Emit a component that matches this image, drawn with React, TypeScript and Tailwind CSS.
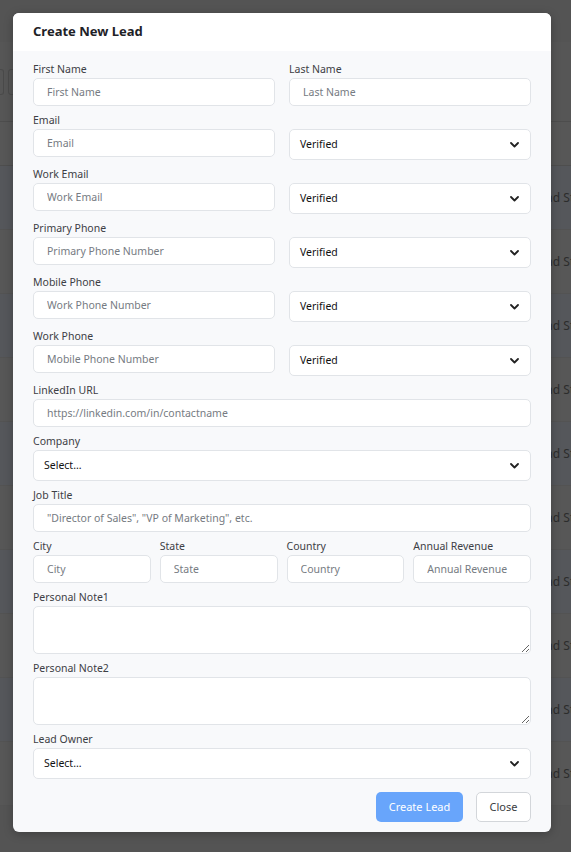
import React from "react";

const font = { fontFamily: '"Noto Sans", "Open Sans", Arial, sans-serif' };

function Chevron() {
  return (
    <svg width="9" height="6" viewBox="0 0 9 6" className="shrink-0">
      <polyline
        points="1,1 4.5,4.5 8,1"
        fill="none"
        stroke="#222"
        strokeWidth="1.8"
        strokeLinecap="round"
        strokeLinejoin="round"
      />
    </svg>
  );
}

function Label({ children }: { children: React.ReactNode }) {
  return (
    <label className="mb-[1px] block text-[10.5px] leading-[15px] text-[#3d4045]">
      {children}
    </label>
  );
}

function TextInput({ placeholder }: { placeholder: string }) {
  return (
    <input
      placeholder={placeholder}
      className="h-[28px] w-full rounded-[5px] border border-[#e1e4e8] bg-white pl-[13px] text-[10.5px] text-[#222] outline-none placeholder:text-[#767b82]"
    />
  );
}

function Select({ value }: { value: string }) {
  return (
    <div className="flex h-[31px] w-full items-center justify-between rounded-[5px] border border-[#e1e4e8] bg-white pr-[11px] pl-[10px] text-[10.5px] text-[#111]">
      <span>{value}</span>
      <Chevron />
    </div>
  );
}

function Field({ label, children }: { label?: string; children: React.ReactNode }) {
  return (
    <div className="mb-[7px] flex flex-col">
      {label ? <Label>{label}</Label> : <div className="h-[16px]" />}
      {children}
    </div>
  );
}

const verifiedRows = [
  ["Email", "Email"],
  ["Work Email", "Work Email"],
  ["Primary Phone", "Primary Phone Number"],
  ["Mobile Phone", "Work Phone Number"],
  ["Work Phone", "Mobile Phone Number"],
];

function Backdrop() {
  const rows = Array.from({ length: 10 });
  return (
    <div className="flex min-h-[852px] flex-col bg-[#565656]">
      <div className="h-[42px] bg-[#545454]" />
      <div className="flex h-[80px] items-center gap-[4px] border-b border-[#4d4d4d]">
        <div className="h-[26px] w-[4px] rounded-r-[3px] border border-l-0 border-[#4a4a4a]" />
        <div className="h-[26px] w-[10px] rounded-l-[3px] border border-[#4a4a4a]" />
      </div>
      <div className="h-[44px] border-b border-[#4e4e4e] bg-[#575757]" />
      {rows.map((_, i) => (
        <div
          key={i}
          className={`flex h-[64px] items-center overflow-hidden border-b border-[#535353] pl-[533px] ${
            i % 2 === 0 ? "bg-[#55575b]" : "bg-[#575757]"
          }`}
        >
          <span className="text-[12px] whitespace-nowrap text-[#2c2c2c]" style={font}>
            Lead Status
          </span>
        </div>
      ))}
      <div className="flex-1 bg-[#545454]" />
    </div>
  );
}

export default function App() {
  return (
    <div className="relative h-[852px] w-[571px] overflow-hidden" style={font}>
      <Backdrop />

      <div className="absolute top-[13px] left-[13px] w-[538px] overflow-hidden rounded-[6px] bg-[#f8f9fb] shadow-[0_2px_10px_rgba(0,0,0,0.25)]">
        <div className="flex h-[38px] items-center bg-white px-[20px]">
          <h2 className="text-[13px] font-bold text-[#1e2227]">Create New Lead</h2>
        </div>

        <div className="px-[20px] pt-[11px] pb-[10px]">
          <div className="grid grid-cols-2 gap-x-[14px]">
            <Field label="First Name">
              <TextInput placeholder="First Name" />
            </Field>
            <Field label="Last Name">
              <TextInput placeholder="Last Name" />
            </Field>
            {verifiedRows.map(([label, ph]) => (
              <React.Fragment key={label}>
                <Field label={label}>
                  <TextInput placeholder={ph} />
                </Field>
                <Field>
                  <Select value="Verified" />
                </Field>
              </React.Fragment>
            ))}
          </div>

          <Field label="LinkedIn URL">
            <TextInput placeholder="https://linkedin.com/in/contactname" />
          </Field>
          <Field label="Company">
            <Select value="Select..." />
          </Field>
          <Field label="Job Title">
            <TextInput placeholder={'"Director of Sales", "VP of Marketing", etc.'} />
          </Field>

          <div className="grid grid-cols-4 gap-x-[9px]">
            {["City", "State", "Country", "Annual Revenue"].map((f) => (
              <Field key={f} label={f}>
                <TextInput placeholder={f} />
              </Field>
            ))}
          </div>

          <Field label="Personal Note1">
            <textarea className="block h-[48px] w-full rounded-[5px] border border-[#e1e4e8] bg-white outline-none" />
          </Field>
          <Field label="Personal Note2">
            <textarea className="block h-[48px] w-full rounded-[5px] border border-[#e1e4e8] bg-white outline-none" />
          </Field>
          <Field label="Lead Owner">
            <Select value="Select..." />
          </Field>

          <div className="flex justify-end gap-[13px] pt-[6px]">
            <button className="h-[30px] w-[87px] rounded-[5px] bg-[#68a5fb] text-[11px] text-white">
              Create Lead
            </button>
            <button className="h-[30px] w-[55px] rounded-[5px] border border-[#d3d6da] bg-white text-[11px] text-[#3a3d42]">
              Close
            </button>
          </div>
        </div>
      </div>
    </div>
  );
}
